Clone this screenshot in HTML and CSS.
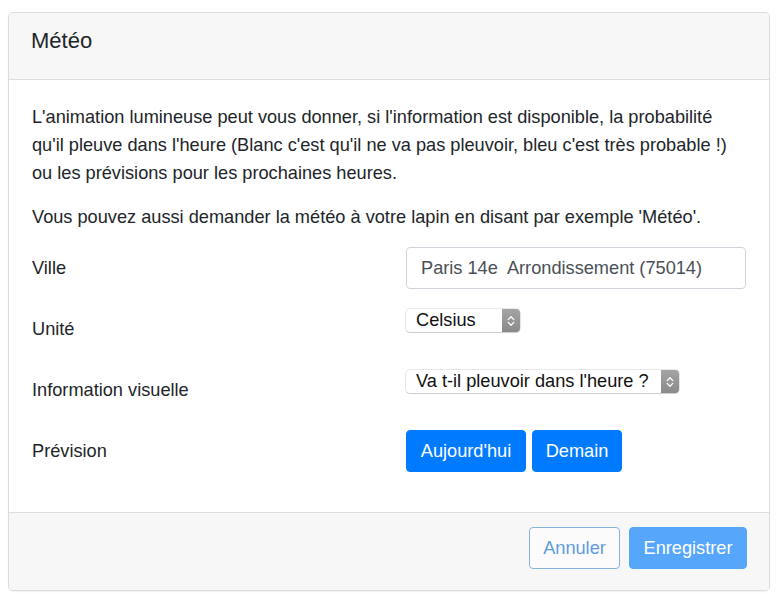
FILE: index.html
```html
<!DOCTYPE html>
<html lang="fr">
<head>
<meta charset="utf-8">
<title>Météo</title>
<link rel="stylesheet" href="styles.css">
</head>
<body>
<div class="modal">
  <div class="modal-header">
    <h5 class="modal-title">Météo</h5>
  </div>
  <div class="modal-body">
    <p class="text">L'animation lumineuse peut vous donner, si l'information est disponible, la probabilité<br>qu'il pleuve dans l'heure (Blanc c'est qu'il ne va pas pleuvoir, bleu c'est très probable !)<br>ou les prévisions pour les prochaines heures.</p>
    <p class="text">Vous pouvez aussi demander la météo à votre lapin en disant par exemple 'Météo'.</p>
    <div class="form">
      <div class="row">
        <label class="label">Ville</label>
        <div class="input">Paris 14e&nbsp; Arrondissement (75014)</div>
      </div>
      <div class="row">
        <label class="label">Unité</label>
        <div class="select select-unit">
          <span class="select-text">Celsius</span>
          <span class="stepper"><svg width="10" height="14" viewBox="0 0 10 14"><path d="M2.2 5.6 L5 2.8 L7.8 5.6 M2.2 8.4 L5 11.2 L7.8 8.4" fill="none" stroke="#fff" stroke-width="1.3" stroke-linecap="round" stroke-linejoin="round"/></svg></span>
        </div>
      </div>
      <div class="row">
        <label class="label">Information visuelle</label>
        <div class="select select-info">
          <span class="select-text">Va t-il pleuvoir dans l'heure ?</span>
          <span class="stepper"><svg width="10" height="14" viewBox="0 0 10 14"><path d="M2.2 5.6 L5 2.8 L7.8 5.6 M2.2 8.4 L5 11.2 L7.8 8.4" fill="none" stroke="#fff" stroke-width="1.3" stroke-linecap="round" stroke-linejoin="round"/></svg></span>
        </div>
      </div>
      <div class="row">
        <label class="label">Prévision</label>
        <div class="btn-group">
          <button class="btn btn-primary btn-today">Aujourd'hui</button>
          <button class="btn btn-primary btn-tomorrow">Demain</button>
        </div>
      </div>
    </div>
  </div>
  <div class="modal-footer">
    <button class="btn btn-outline-disabled">Annuler</button>
    <button class="btn btn-primary-disabled">Enregistrer</button>
  </div>
</div>
</body>
</html>
```

FILE: styles.css
```css
* { box-sizing: border-box; }

html, body {
  margin: 0;
  padding: 0;
  background: #ffffff;
}

body {
  font-family: "Liberation Sans", Arial, Helvetica, sans-serif;
  color: #212529;
  padding: 12px 10px 9px 8px;
}

.modal {
  width: 762px;
  border: 1px solid #dcdcdc;
  border-radius: 5px;
  background: #fff;
  box-shadow: 0 1px 2px rgba(0,0,0,0.06);
  overflow: hidden;
}

.modal-header {
  background: #f7f7f7;
  border-bottom: 1px solid #dedede;
  padding: 11px 22px 22px;
}

.modal-title {
  margin: 0;
  font-size: 22px;
  line-height: 33px;
  font-weight: 400;
  color: #212529;
}

.modal-body {
  padding: 23px 23px 40px;
}

.text {
  margin: 0 0 16px;
  font-size: 18.2px;
  line-height: 28px;
  white-space: nowrap;
}

.form {
  display: flex;
  flex-direction: column;
  gap: 19px;
}

.row {
  display: grid;
  grid-template-columns: 374px 1fr;
  align-items: start;
}

.label {
  font-size: 18.2px;
  line-height: 42px;
  height: 42px;
}

.input {
  height: 42px;
  border: 1px solid #ced4da;
  border-radius: 4px;
  padding: 0 14px;
  font-size: 18.2px;
  line-height: 40px;
  color: #495057;
  white-space: pre;
}

.select {
  margin-top: 1px;
  display: flex;
  align-items: stretch;
  height: 23px;
  background: #fff;
  border-radius: 4px;
  box-shadow: 0 0 0 0.5px rgba(0,0,0,0.18), 0 1px 1px rgba(0,0,0,0.12);
}

.select-unit { width: 114px; }
.select-info { width: 273px; }

.select-text {
  flex: 1;
  padding-left: 10px;
  font-size: 18.2px;
  line-height: 23px;
  color: #111;
  white-space: nowrap;
}

.stepper {
  width: 18px;
  display: flex;
  align-items: center;
  justify-content: center;
  background: linear-gradient(#a4a4a4, #8a8a8a);
  border-radius: 0 4px 4px 0;
}

.btn-group {
  display: flex;
  gap: 6px;
}

.btn {
  font-family: inherit;
  font-size: 18.2px;
  height: 42px;
  padding: 0 15px;
  border-radius: 4px;
  border: 1px solid transparent;
  line-height: 40px;
  cursor: pointer;
}

.btn-primary {
  background: #007bff;
  border-color: #007bff;
  color: #fff;
}

.btn-today { width: 120px; padding: 0; }
.btn-tomorrow { width: 90px; padding: 0; }

.modal-footer {
  background: #f7f7f7;
  border-top: 1px solid #dedede;
  padding: 14px 22px 21px;
  display: flex;
  justify-content: flex-end;
  gap: 9px;
}

.btn-outline-disabled {
  width: 91px;
  padding: 0;
  background: #fbfbfb;
  border-color: #86b2e0;
  color: #5f9bdc;
}

.btn-primary-disabled {
  width: 118px;
  padding: 0;
  background: #56a6fc;
  border-color: #56a6fc;
  color: #fff;
}
```
